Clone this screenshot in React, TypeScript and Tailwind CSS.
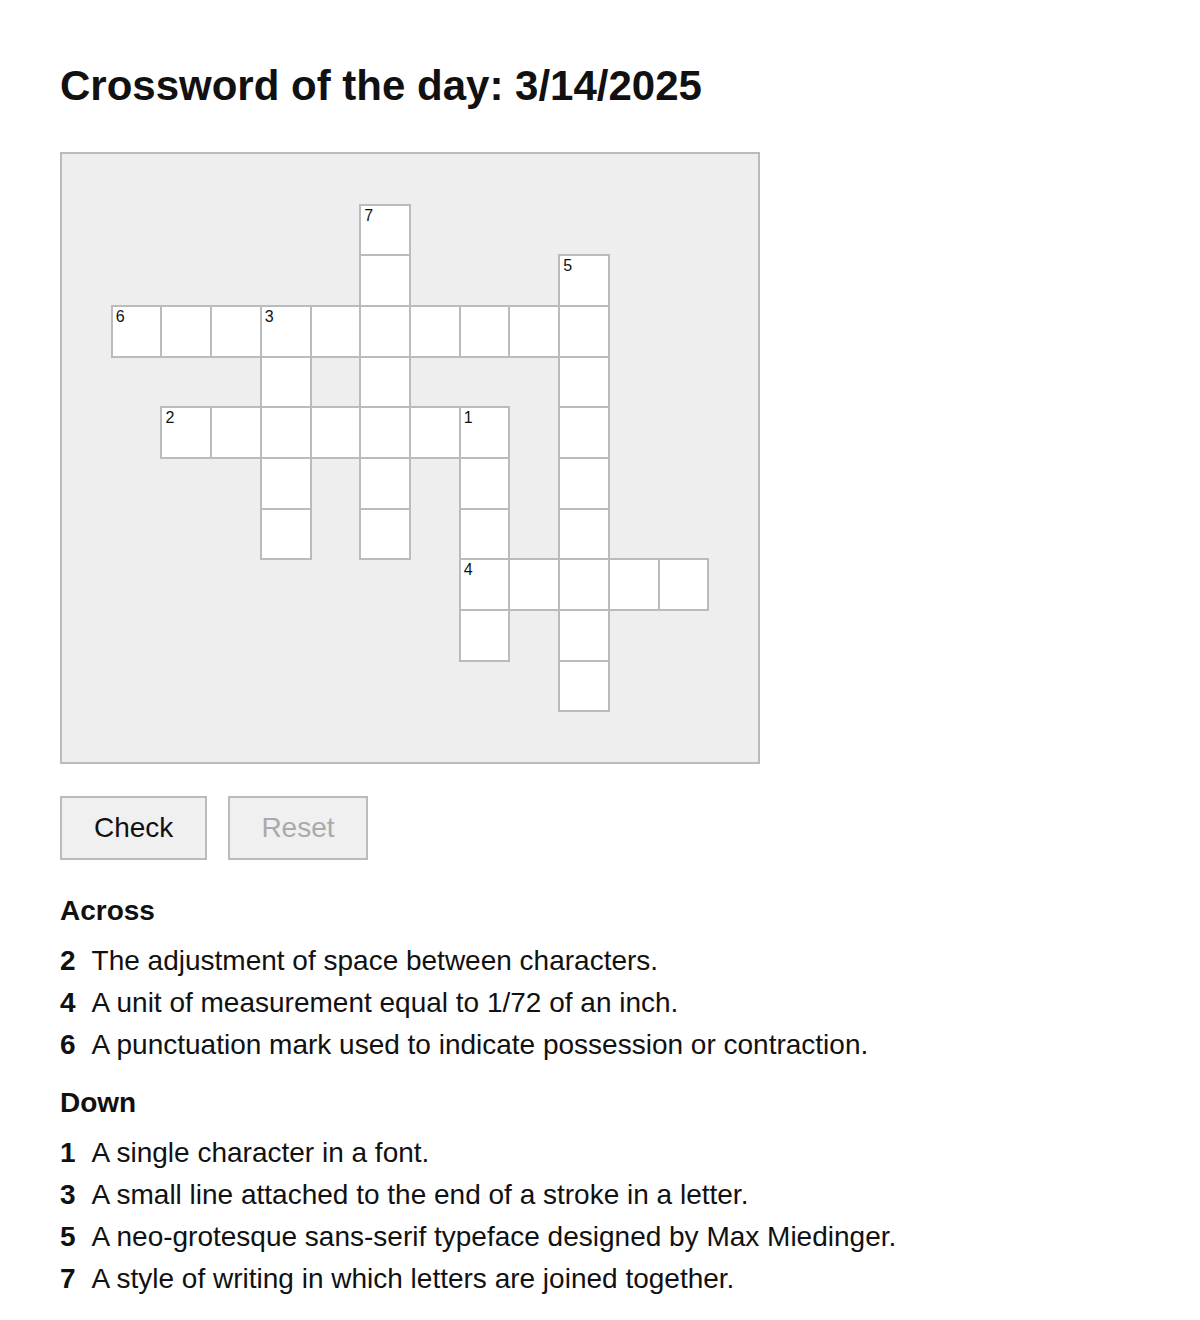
const layout = [
  "..............",
  "......#.......",
  "......#...#...",
  ".##########...",
  "....#.#...#...",
  "..#######.#...",
  "....#.#.#.#...",
  "....#.#.#.#...",
  "........#####.",
  "........#.#...",
  "..........#...",
  "..............",
];

const numbers: Record<string, number> = {
  "1-6": 7,
  "2-10": 5,
  "3-1": 6,
  "3-4": 3,
  "5-2": 2,
  "5-8": 1,
  "8-8": 4,
};

const across = [
  { n: 2, text: "The adjustment of space between characters." },
  { n: 4, text: "A unit of measurement equal to 1/72 of an inch." },
  { n: 6, text: "A punctuation mark used to indicate possession or contraction." },
];

const down = [
  { n: 1, text: "A single character in a font." },
  { n: 3, text: "A small line attached to the end of a stroke in a letter." },
  { n: 5, text: "A neo-grotesque sans-serif typeface designed by Max Miedinger." },
  { n: 7, text: "A style of writing in which letters are joined together." },
];

function ClueList({ title, clues }: { title: string; clues: { n: number; text: string }[] }) {
  return (
    <div>
      <h2 className="text-[28px] font-bold leading-[42px]">{title}</h2>
      <ul className="mt-[8px]">
        {clues.map((c) => (
          <li key={c.n} className="flex gap-[16px] text-[28px] leading-[42px]">
            <span className="font-bold">{c.n}</span>
            <span>{c.text}</span>
          </li>
        ))}
      </ul>
    </div>
  );
}

export default function App() {
  return (
    <div className="min-h-screen bg-white pl-[60px] pt-[62px] text-[#111] font-['Liberation_Sans',Arial,sans-serif]">
      <h1 className="text-[42px] font-bold leading-[48px]">Crossword of the day: 3/14/2025</h1>

      <div className="mt-[42px] grid h-[612px] w-[700px] grid-cols-[repeat(14,1fr)] grid-rows-[repeat(12,1fr)] border-2 border-[#bbb] bg-[#eee]">
        {layout.map((row, r) =>
          row.split("").map((ch, c) =>
            ch === "#" ? (
              <div key={`${r}-${c}`} className="-m-[1px] border-2 border-[#bbb] bg-white pl-[3px] pt-[2px] text-[16px] leading-none">
                {numbers[`${r}-${c}`] ?? ""}
              </div>
            ) : (
              <div key={`${r}-${c}`} />
            )
          )
        )}
      </div>

      <div className="mt-[32px] flex gap-[21px]">
        <button className="flex h-[64px] items-center border-2 border-[#bbb] bg-[#f0f0f0] px-[32px] text-[28px]">Check</button>
        <button disabled className="flex h-[64px] items-center border-2 border-[#bbb] bg-[#f0f0f0] px-[31px] text-[28px] text-[#aaa]">Reset</button>
      </div>

      <div className="mt-[30px]">
        <ClueList title="Across" clues={across} />
      </div>
      <div className="mt-[16px] pb-[20px]">
        <ClueList title="Down" clues={down} />
      </div>
    </div>
  );
}
